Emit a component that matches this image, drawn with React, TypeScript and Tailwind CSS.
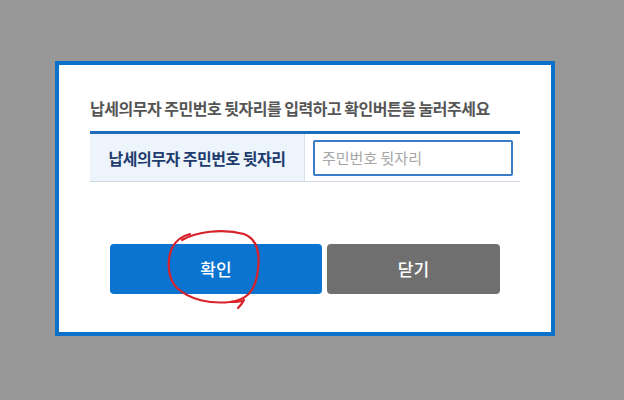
import React from 'react';

const KR = { fontFamily: '"Noto Sans CJK KR", "Noto Sans", sans-serif' };

const Scribble = () => (
  <svg
    className="absolute left-[160px] top-[226px] pointer-events-none"
    width="110"
    height="86"
    viewBox="0 0 110 86"
    fill="none"
    stroke="#d8222a"
    strokeWidth="2.2"
    strokeLinecap="round"
    strokeLinejoin="round"
  >
    <path d="M22 14 C 36 6, 62 2, 84 8 C 100 14, 100 34, 97 50 C 94 66, 86 74, 70 76 C 50 78, 30 74, 17 62 C 7 52, 7 34, 12 22 C 16 14, 22 10, 30 8" />
    <path d="M70 76 C 76 76, 82 76, 84 74 C 82 78, 80 80, 78 82" />
  </svg>
);

export default function App() {
  return (
    <div className="relative w-[624px] h-[400px] bg-[#989898] pt-[61px] pl-[55px]" style={KR}>
      <div className="w-[500px] h-[275px] bg-white border-4 border-[#0d70c9] px-[31px] pt-[32px]">
        <p className="text-[16px] font-bold text-[#555] leading-[22px] tracking-[-0.5px]">
          납세의무자 주민번호 뒷자리를 입력하고 확인버튼을 눌러주세요
        </p>
        <div className="mt-[12px] w-[430px] border-t-[3px] border-[#1d6cb9] border-b border-b-[#cfd9e4] flex h-[51px]">
          <div className="w-[215px] bg-[#eef4fb] border-r border-[#d6e0ea] flex items-center justify-center text-[16px] font-bold text-[#1e3c6e] tracking-[-0.5px]">
            납세의무자 주민번호 뒷자리
          </div>
          <div className="flex-1 flex items-center pl-[8px]">
            <input
              className="w-[200px] h-[36px] border-2 border-[#3a7cc8] rounded-[2px] px-[7px] text-[15px] text-[#333] placeholder:text-[#a6a6a6] outline-none"
              placeholder="주민번호 뒷자리"
              style={KR}
            />
          </div>
        </div>
        <div className="mt-[62px] flex gap-[5px] pl-[20px]">
          <button className="w-[212px] h-[50px] rounded-[4px] bg-[#0b74d1] text-white text-[17px] font-medium" style={KR}>
            확인
          </button>
          <button className="w-[173px] h-[50px] rounded-[4px] bg-[#6f6f6f] text-white text-[17px] font-medium" style={KR}>
            닫기
          </button>
        </div>
      </div>
      <Scribble />
    </div>
  );
}
